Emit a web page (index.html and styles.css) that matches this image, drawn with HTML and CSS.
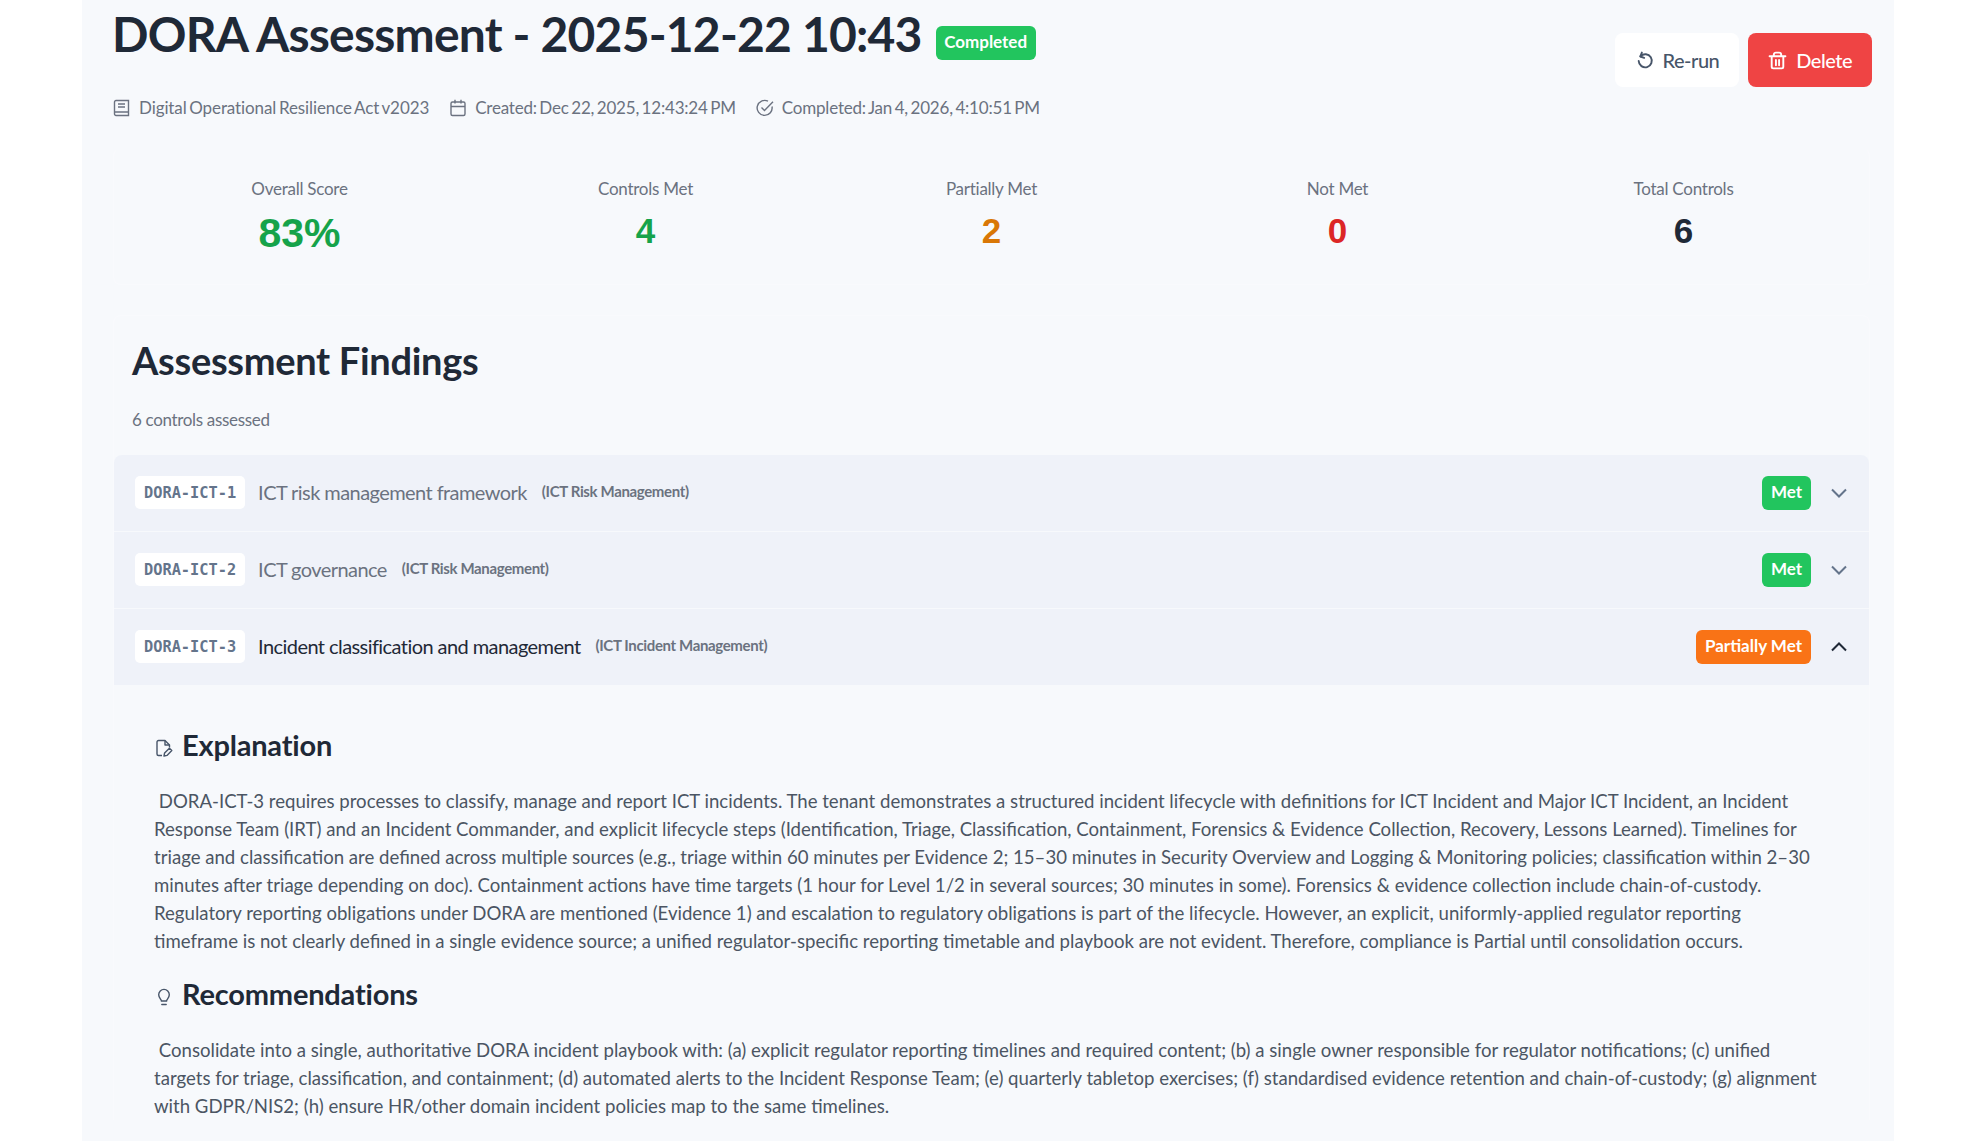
FILE: index.html
```html
<!DOCTYPE html>
<html lang="en">
<head>
<meta charset="utf-8">
<title>DORA Assessment</title>
<link rel="stylesheet" href="styles.css">
</head>
<body>
<main class="panel">
  <header class="head">
    <div class="head-main">
      <div class="title-row">
        <h1 class="title">DORA Assessment - 2025-12-22 10:43</h1>
        <span class="badge badge-green badge-status">Completed</span>
      </div>
      <div class="meta">
        <span class="meta-item"><svg class="meta-icon" viewBox="0 0 18 18" fill="none" stroke="currentColor" stroke-width="1.4"><path d="M1.500 15V3A1.500 1.500 0 0 1 3 1.500h12.500V16.500H3A1.500 1.500 0 0 1 1.500 15zM1.500 13h14M5 5h7M5 8h7"/></svg>Digital Operational Resilience Act v2023</span>
        <span class="meta-item"><svg class="meta-icon" viewBox="0 0 18 18" fill="none" stroke="currentColor" stroke-width="1.4"><rect x="2" y="3" width="14" height="13.500" rx="1.500"/><path d="M2 7.500h14M6 .8v3.700M12 .8v3.700"/></svg>Created: Dec 22, 2025, 12:43:24 PM</span>
        <span class="meta-item"><svg class="meta-icon" viewBox="0 0 18 18" fill="none" stroke="currentColor" stroke-width="1.4"><path d="M16 7.500A7.500 7.500 0 1 1 12 2.200"/><path d="M5.500 8.500l3 3L17 2.800"/></svg>Completed: Jan 4, 2026, 4:10:51 PM</span>
      </div>
    </div>
    <div class="actions">
      <button class="btn btn-light"><svg class="btn-icon" viewBox="0 0 18 18" fill="none" stroke="currentColor" stroke-width="1.800" stroke-linecap="round" stroke-linejoin="round"><path d="M5.200 5A6.200 6.200 0 1 1 3.500 9.500"/><path d="M6.500 1.500L5 5.200l3.700 1.300"/></svg>Re-run</button>
      <button class="btn btn-red"><svg class="btn-icon" viewBox="0 0 18 18" fill="none" stroke="currentColor" stroke-width="1.800" stroke-linecap="round" stroke-linejoin="round"><path d="M1.500 5h15M3.500 5v10a1.500 1.500 0 0 0 1.500 1.500h8a1.500 1.500 0 0 0 1.500-1.500V5M5.500 5V3.500a2 2 0 0 1 2-2h3a2 2 0 0 1 2 2V5M7.500 8.500v5M10.500 8.500v5"/></svg>Delete</button>
    </div>
  </header>

  <section class="stats">
    <div class="stat"><div class="stat-label">Overall Score</div><div class="stat-value stat-large green">83%</div></div>
    <div class="stat"><div class="stat-label">Controls Met</div><div class="stat-value green">4</div></div>
    <div class="stat"><div class="stat-label">Partially Met</div><div class="stat-value amber">2</div></div>
    <div class="stat"><div class="stat-label">Not Met</div><div class="stat-value red">0</div></div>
    <div class="stat"><div class="stat-label">Total Controls</div><div class="stat-value dark">6</div></div>
  </section>

  <section class="findings">
    <h2 class="findings-title">Assessment Findings</h2>
    <p class="findings-sub">6 controls assessed</p>
    <div class="rows">
      <div class="row">
        <code class="code">DORA-ICT-1</code>
        <span class="row-name">ICT risk management framework</span>
        <span class="row-cat">(ICT Risk Management)</span>
        <span class="badge badge-green">Met</span>
        <svg class="chev" viewBox="0 0 16 16" fill="none" stroke="currentColor" stroke-width="2"><path d="M1 4.500l7 7 7-7"/></svg>
      </div>
      <div class="row">
        <code class="code">DORA-ICT-2</code>
        <span class="row-name">ICT governance</span>
        <span class="row-cat">(ICT Risk Management)</span>
        <span class="badge badge-green">Met</span>
        <svg class="chev" viewBox="0 0 16 16" fill="none" stroke="currentColor" stroke-width="2"><path d="M1 4.500l7 7 7-7"/></svg>
      </div>
      <div class="row row-open">
        <code class="code">DORA-ICT-3</code>
        <span class="row-name">Incident classification and management</span>
        <span class="row-cat">(ICT Incident Management)</span>
        <span class="badge badge-orange">Partially Met</span>
        <svg class="chev" viewBox="0 0 16 16" fill="none" stroke="currentColor" stroke-width="2"><path d="M1 11.500l7-7 7 7"/></svg>
      </div>
    </div>
    <div class="detail">
      <h3 class="detail-head"><svg class="detail-icon" viewBox="0 0 18 18" fill="none" stroke="currentColor" stroke-width="1.400" stroke-linejoin="round"><path d="M7 16.500H3.500A1.500 1.500 0 0 1 2 15V3a1.500 1.500 0 0 1 1.500-1.500H10l4.500 4.500v2.500"/><path d="M10 1.500v4.500h4.500M9 17l.6-3 4.800-4.800 2.400 2.400-4.800 4.800z"/></svg>Explanation</h3>
      <p class="detail-text">&nbsp;DORA-ICT-3 requires processes to classify, manage and report ICT incidents. The tenant demonstrates a structured incident lifecycle with definitions for ICT Incident and Major ICT Incident, an Incident Response Team (IRT) and an Incident Commander, and explicit lifecycle steps (Identification, Triage, Classification, Containment, Forensics &amp; Evidence Collection, Recovery, Lessons Learned). Timelines for triage and classification are defined across multiple sources (e.g., triage within 60 minutes per Evidence 2; 15–30 minutes in Security Overview and Logging &amp; Monitoring policies; classification within 2–30 minutes after triage depending on doc). Containment actions have time targets (1 hour for Level 1/2 in several sources; 30 minutes in some). Forensics &amp; evidence collection include chain-of-custody. Regulatory reporting obligations under DORA are mentioned (Evidence 1) and escalation to regulatory obligations is part of the lifecycle. However, an explicit, uniformly-applied regulator reporting timeframe is not clearly defined in a single evidence source; a unified regulator-specific reporting timetable and playbook are not evident. Therefore, compliance is Partial until consolidation occurs.</p>
      <h3 class="detail-head"><svg class="detail-icon" viewBox="0 0 18 18" fill="none" stroke="currentColor" stroke-width="1.400" stroke-linecap="round"><path d="M6.500 13c0-1.500-2.800-3-2.800-6.300a5.300 5.300 0 0 1 10.600 0c0 3.300-2.800 4.800-2.800 6.300zM6.800 16.500h4.400"/></svg>Recommendations</h3>
      <p class="detail-text">&nbsp;Consolidate into a single, authoritative DORA incident playbook with: (a) explicit regulator reporting timelines and required content; (b) a single owner responsible for regulator notifications; (c) unified targets for triage, classification, and containment; (d) automated alerts to the Incident Response Team; (e) quarterly tabletop exercises; (f) standardised evidence retention and chain-of-custody; (g) alignment with GDPR/NIS2; (h) ensure HR/other domain incident policies map to the same timelines.</p>
    </div>
  </section>
</main>
</body>
</html>
```

FILE: styles.css
```css
* { box-sizing: border-box; }
html, body { margin: 0; height: 100%; background: #fff; overflow: hidden; }
body { font-family: Lato, "Noto Sans", sans-serif; color: #1f2937; }
.panel { width: 1812px; height: 1141px; margin-left: 82px; background: #f7f9fc; overflow: hidden; padding: 0 22px 0 31px; }
.head { display: flex; justify-content: space-between; align-items: flex-start; height: 148px; }
.title-row { display: flex; align-items: center; gap: 14px; height: 68px; margin-left: -1px; }
.title { margin: 0; font-size: 48px; font-weight: 700; line-height: 68px; letter-spacing: -0.8px; color: #1f2937; white-space: nowrap; }
.badge { display: inline-flex; align-items: center; height: 34px; padding: 0 9px 3px; border-radius: 6px; color: #fff; font-size: 17px; font-weight: 700; white-space: nowrap; }
.badge-green { background: #22c55e; }
.badge-orange { background: #f97316; }
.badge-status { margin-top: 18px; padding: 0 8.500px 3px; }
.meta { display: flex; gap: 20px; margin-top: 29px; color: #6b7280; font-size: 17px; letter-spacing: -0.2px; word-spacing: -1.600px; }
.meta-item { display: inline-flex; align-items: center; gap: 8px; white-space: nowrap; }
.meta-item:first-child { letter-spacing: -0.1px; }
.meta-icon { width: 18px; height: 18px; }
.actions { display: flex; gap: 9px; margin-top: 33px; }
.btn { display: inline-flex; align-items: center; gap: 9px; height: 54px; padding: 0 20px; border: 0; border-radius: 8px; font-family: inherit; font-size: 20px; font-weight: 500; letter-spacing: -0.5px; }
.btn-light { background: #fff; color: #475569; }
.btn-red { background: #ef4444; color: #fff; }
.btn-icon { width: 19px; height: 19px; }
.stats { display: grid; grid-template-columns: repeat(5, 346px); width: 1757px; height: 137px; margin: 0 -2px 30px 0; padding-left: 12.500px; border: 1px solid #f9fafd; border-top-color: transparent; border-radius: 8px; }
.stat { text-align: center; padding-top: 28px; }
.stat-label { font-size: 17px; line-height: 24px; letter-spacing: -0.25px; color: #6b7280; }
.stat-value { font-size: 35px; line-height: 46px; font-weight: 700; margin-top: 7px; font-family: "Liberation Sans", Arial, sans-serif; }
.stat-large { font-size: 41px; line-height: 50px; }
.green { color: #16a34a; }
.amber { color: #d97706; }
.red { color: #dc2626; }
.dark { color: #1f2937; }
.findings { width: 1757px; padding-top: 21px; border: 1px solid #f9fafd; border-bottom: 0; border-radius: 8px 8px 0 0; }
.findings-title { margin: 0 0 0 18px; font-size: 38px; line-height: 46px; font-weight: 700; letter-spacing: -0.3px; color: #1f2937; }
.findings-sub { margin: 25px 0 0 18px; font-size: 17px; line-height: 24px; letter-spacing: -0.33px; color: #6b7280; }
.rows { margin-top: 23px; border-radius: 8px 8px 0 0; overflow: hidden; width: 1755px; }
.row { display: flex; align-items: center; height: 75.500px; background: #eff2f9; padding: 0 22px 0 21px; margin-bottom: 1.500px; color: #6b7280; }
.row-open { margin-bottom: 0; color: #1f2937; }
.code { background: #fff; border-radius: 5px; font-family: "DejaVu Sans Mono", monospace; font-weight: 600; font-size: 15.300px; color: #64748b; padding: 0 9px; height: 33px; display: inline-flex; align-items: center; }
.row-name { font-size: 20px; letter-spacing: -0.57px; margin-left: 13px; padding-bottom: 2px; }
.row-cat { font-size: 15px; font-weight: 700; letter-spacing: -0.36px; color: #6b7280; margin-left: 15px; margin-right: auto; padding-bottom: 3px; }
.chev { width: 16px; height: 16px; margin-left: 20px; color: #64748b; }
.row-open .chev { color: #1f2937; }
.detail { padding: 0 40px; width: 1755px; }
.detail-head { display: flex; align-items: center; gap: 9px; margin: 0; font-size: 29px; line-height: 40px; font-weight: 700; letter-spacing: -0.2px; color: #1f2937; padding-top: 40.500px; }
.detail-head .detail-icon { width: 18px; height: 18px; color: #475569; margin-top: 5px; margin-left: 1px; }
.detail-text { margin: 22px 0 0; font-size: 18.600px; line-height: 28px; color: #4b5563; }
.detail-text + .detail-head { padding-top: 19px; }
```
